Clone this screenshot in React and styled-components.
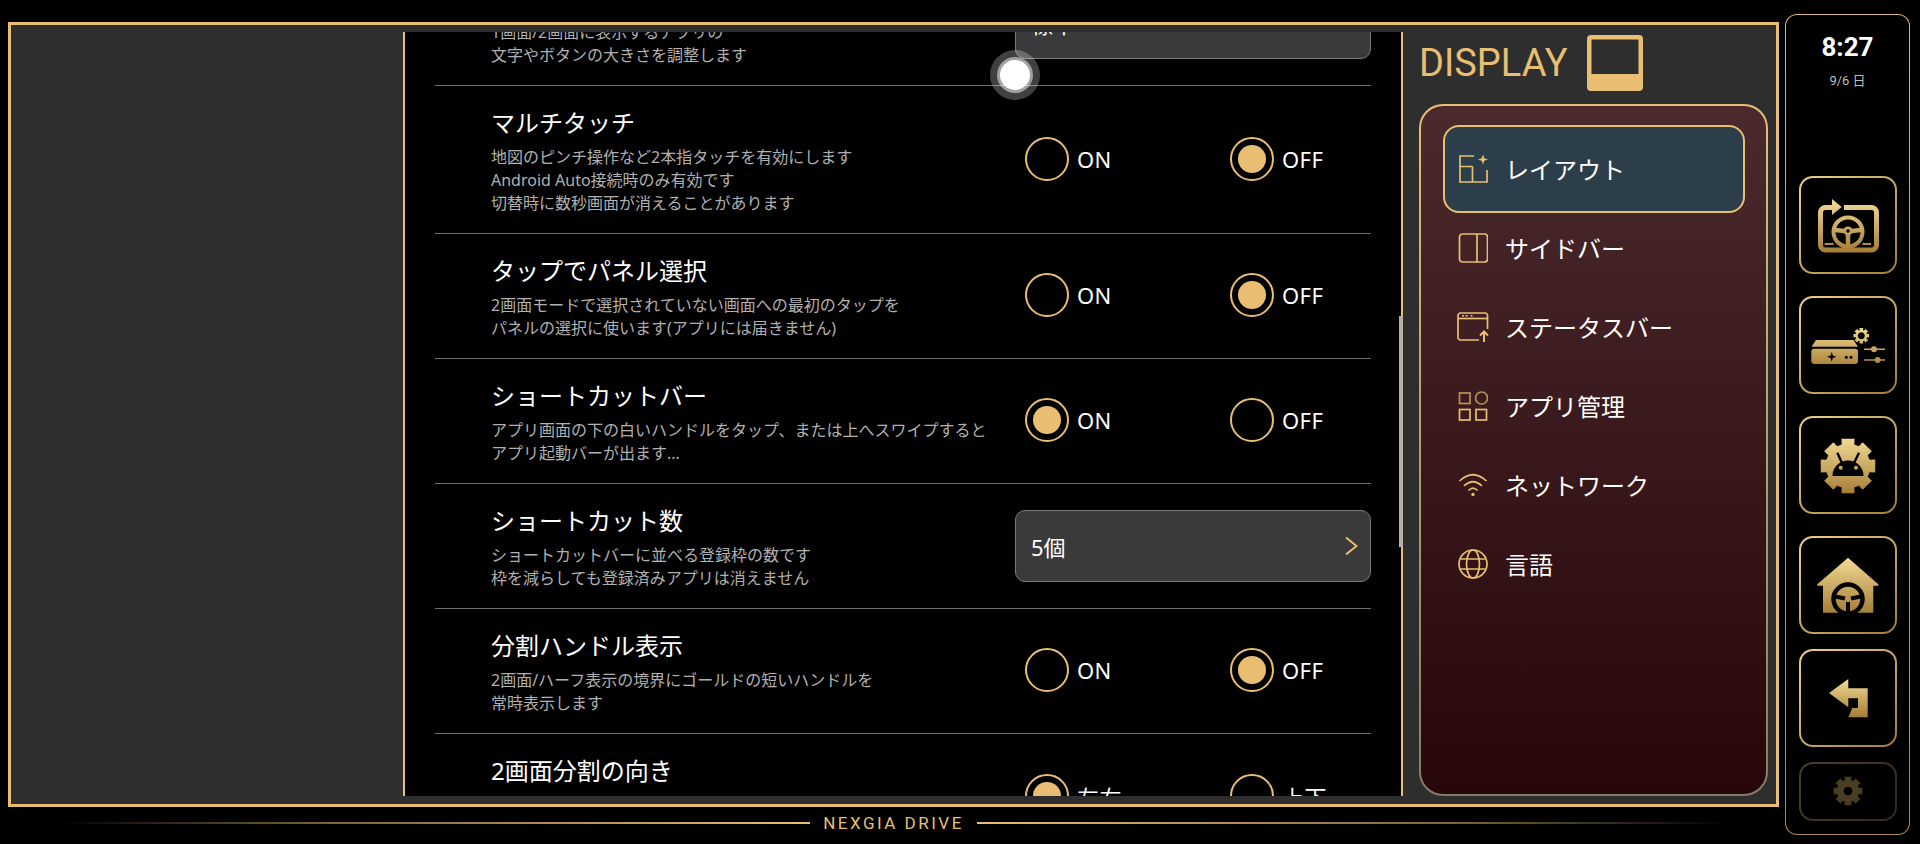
import styled, { createGlobalStyle } from "styled-components";

const GOLD = "#e8bf72";
const JP = `"Noto Sans", "Noto Sans CJK JP", sans-serif`;

const GlobalStyle = createGlobalStyle`
  * { box-sizing: border-box; }
  html, body { margin: 0; background: #000; overflow: hidden; }
  body { font-family: ${JP}; color: #fff; }
`;

const Page = styled.div`
  position: relative;
  display: flex;
  gap: 6px;
  width: 1920px;
  height: 844px;
  padding-left: 8px;
  overflow: hidden;
`;

const Main = styled.div`
  display: flex;
  flex-direction: column;
  width: 1771px;
`;

const Frame = styled.div`
  display: flex;
  height: 785px;
  margin-top: 22px;
  padding: 7px 0 8px;
  border: 3px solid ${GOLD};
  background: #2e2e2e;
`;

const EmptyArea = styled.div`
  width: 392px;
  flex-shrink: 0;
`;

const Panel = styled.div`
  position: relative;
  width: 1000px;
  flex-shrink: 0;
  background: #000;
  border-left: 2px solid ${GOLD};
  border-right: 2px solid ${GOLD};
`;

const Scroller = styled.div`
  height: 100%;
  padding: 0 30px;
  overflow: hidden;
`;

const ScrollList = styled.div`
  margin-top: -71px;
`;

const ScrollBar = styled.div`
  position: absolute;
  top: 284px;
  right: -2px;
  width: 4px;
  height: 231px;
  background: #b9b0a4;
`;

const Row = styled.div`
  display: flex;
  align-items: center;
  min-height: 125px;
  border-bottom: ${({ $last }) => ($last ? "none" : "1px solid #6e6e6e")};
`;

const RowText = styled.div`
  flex: 1;
  align-self: flex-start;
  padding: 20px 0 17.7px 56px;
`;

const RowTitle = styled.div`
  font-size: 24px;
  line-height: 33px;
  white-space: nowrap;
`;

const RowDesc = styled.div`
  margin-top: 6.5px;
  font-size: 16px;
  line-height: 23.4px;
  color: #b0b0b0;
  white-space: pre-line;
`;

const Controls = styled.div`
  width: 356px;
  flex-shrink: 0;
`;

const RadioGroup = styled.div`
  display: grid;
  grid-template-columns: 205px 1fr;
  padding: 0 0 2px 10px;
`;

const RadioItem = styled.div`
  display: flex;
  align-items: center;
  gap: 8px;
  font-size: 22px;
  letter-spacing: 0.4px;
`;

const RadioRing = styled.div`
  display: flex;
  align-items: center;
  justify-content: center;
  width: 44px;
  height: 44px;
  border: 2px solid ${GOLD};
  border-radius: 50%;
`;

const RadioDot = styled.div`
  width: 28px;
  height: 28px;
  border-radius: 50%;
  background: ${GOLD};
`;

const Select = styled.div`
  display: flex;
  align-items: center;
  justify-content: space-between;
  height: 72px;
  padding: 0 12px 0 15px;
  border: 1px solid #7a7a7a;
  border-radius: 10px;
  background: #3a3a3a;
  font-size: 22px;
`;

const TouchDot = styled.div`
  position: absolute;
  left: 990px;
  top: 50px;
  display: flex;
  align-items: center;
  justify-content: center;
  width: 50px;
  height: 50px;
  border-radius: 50%;
  background: rgba(255, 255, 255, 0.25);

  &::after {
    content: "";
    width: 30px;
    height: 30px;
    border-radius: 50%;
    background: #fff;
    box-shadow: 0 0 0 3px rgba(255, 255, 255, 0.5);
  }
`;

const Side = styled.div`
  display: flex;
  flex: 1;
  flex-direction: column;
  min-width: 0;
  padding: 3px 8px 0 16px;
`;

const SideHeader = styled.div`
  display: flex;
  align-items: center;
  gap: 19px;
  height: 56px;
  margin-bottom: 13px;
  font-family: Roboto, sans-serif;
  font-size: 38px;
  color: ${GOLD};
`;

const Menu = styled.div`
  flex: 1;
  display: flex;
  flex-direction: column;
  padding: 23.5px 21px 0 22px;
  border: 2px solid transparent;
  border-radius: 24px;
  background:
    linear-gradient(180deg, #4a2a2c 0%, #270709 100%) padding-box,
    linear-gradient(180deg, ${GOLD} 0%, #857c68 100%) border-box;
`;

const MenuItem = styled.div`
  display: flex;
  align-items: center;
  flex-shrink: 0;
  height: ${({ $active }) => ($active ? "88px" : "79px")};
  margin: ${({ $active }) => ($active ? "-4.5px 0" : "0")};
  padding-left: 12px;
  border: 2px solid ${({ $active }) => ($active ? GOLD : "transparent")};
  border-radius: 16px;
  background: ${({ $active }) => ($active ? "#2c3e4a" : "transparent")};
  font-size: 24px;
`;

const MenuIcon = styled.div`
  display: flex;
  align-items: center;
  justify-content: center;
  width: 32px;
  margin-right: 16px;
  flex-shrink: 0;
`;

const MenuLabel = styled.span`
  padding-bottom: 2px;
`;

const Brand = styled.div`
  display: flex;
  align-items: center;
  gap: 13px;
  height: 32px;
  padding: 0 50px;
  font-family: Roboto, sans-serif;
  font-size: 17px;
  letter-spacing: 2.5px;
  color: ${GOLD};
`;

const BrandLine = styled.div`
  flex: 1;
  height: 2px;
  background: linear-gradient(
    ${({ $flip }) => ($flip ? "270deg" : "90deg")},
    transparent 0%,
    #7a6238 35%,
    ${GOLD} 100%
  );
`;

const Rail = styled.div`
  display: flex;
  flex-direction: column;
  align-items: center;
  width: 125px;
  height: 821px;
  margin-top: 14px;
  border: 1.5px solid transparent;
  border-radius: 12px;
  background:
    linear-gradient(#000, #000) padding-box,
    linear-gradient(180deg, #d8b770 0%, #a88a4c 100%) border-box;
`;

const Clock = styled.div`
  display: flex;
  flex-direction: column;
  align-items: center;
  height: 160.5px;
  padding-top: 15px;
  font-family: Roboto, "Noto Sans CJK JP", sans-serif;
`;

const ClockTime = styled.div`
  font-size: 26px;
  font-weight: 700;
  line-height: 34px;
`;

const ClockDate = styled.div`
  margin-top: 8px;
  font-size: 13px;
  line-height: 18px;
  color: #bdbdbd;
`;

const ButtonStack = styled.div`
  display: flex;
  flex-direction: column;
  gap: ${({ $gap }) => $gap}px;
  margin-top: ${({ $top }) => $top}px;
`;

const RailButton = styled.div`
  display: flex;
  align-items: center;
  justify-content: center;
  width: 98px;
  height: ${({ $dim }) => ($dim ? "59px" : "98px")};
  border: 2px solid transparent;
  border-radius: 14px;
  background:
    linear-gradient(#000, #000) padding-box,
    linear-gradient(
        135deg,
        ${({ $dim }) => ($dim ? "#4a3f27, #33291a" : "#efd08a, #a07c36")}
      )
      border-box;
`;

// shared vertical gold gradient for the rail icons
const GoldFill = ({ id, y1 = 22, y2 = 78 }) => (
  <defs>
    <linearGradient id={id} gradientUnits="userSpaceOnUse" x1="0" y1={y1} x2="0" y2={y2}>
      <stop offset="0" stopColor="#f2da94" />
      <stop offset="1" stopColor="#a57d35" />
    </linearGradient>
  </defs>
);

const gearPath = (cx, cy, ro, ri, n, outer = 0.3, root = 0.36) => {
  const pitch = (Math.PI * 2) / n;
  const pts = [];
  for (let i = 0; i < n; i++) {
    const a = i * pitch - Math.PI / 2;
    [
      [ri, a - pitch * root],
      [ro, a - pitch * outer],
      [ro, a + pitch * outer],
      [ri, a + pitch * root],
    ].forEach(([r, t]) => {
      pts.push(`${(cx + r * Math.cos(t)).toFixed(2)} ${(cy + r * Math.sin(t)).toFixed(2)}`);
    });
  }
  return `M${pts.join("L")}Z`;
};

const RailSvg = ({ children, h = 94 }) => (
  <svg width="94" height={h} viewBox={`2 2 94 ${h}`} fill="none">
    {children}
  </svg>
);

const WheelRotateIcon = () => (
  <RailSvg>
    <GoldFill id="g1" y1={24} y2={76} />
    <path
      d="M35 31.5H26.5a5 5 0 0 0-5 5V69a5 5 0 0 0 5 5H72.500a5 5 0 0 0 5-5V36.500a5 5 0 0 0-5-5H45"
      stroke="url(#g1)"
      strokeWidth="5"
    />
    <path d="M33 23L42.700 31L33 39Z" fill="url(#g1)" />
    <circle cx="49" cy="56" r="14.500" stroke="url(#g1)" strokeWidth="4" />
    <circle cx="49" cy="55" r="3.200" stroke="url(#g1)" strokeWidth="2.800" />
    <path
      d="M36 54L45.500 55M62 54L52.500 55M49 58V71"
      stroke="url(#g1)"
      strokeWidth="4.500"
    />
    <path d="M25.700 68H34.500M63.500 68H72" stroke="url(#g1)" strokeWidth="1.800" />
  </RailSvg>
);

const BoxSettingsIcon = () => (
  <RailSvg>
    <GoldFill id="g2" y1={32} y2={72} />
    <path d="M17 44H54.500L59 50.800H12.500Z" fill="url(#g2)" />
    <rect x="12.300" y="52.800" width="46.700" height="15.200" rx="3" fill="url(#g2)" />
    <path
      d="M32.700 56L33.900 59.500L37.400 60.700L33.900 61.900L32.700 65.400L31.500 61.900L28 60.700L31.500 59.500Z"
      fill="#000"
    />
    <circle cx="47.300" cy="61.300" r="1.500" fill="#000" />
    <circle cx="52" cy="61.300" r="1.500" fill="#000" />
    <path
      fillRule="evenodd"
      d={`${gearPath(62.3, 39.7, 8, 5.8, 8)}M62.300 36.200a3.500 3.500 0 1 0 .01 0Z`}
      fill="url(#g2)"
    />
    <path d="M65 53.300H86M65 64H86" stroke="url(#g2)" strokeWidth="1.500" />
    <circle cx="75" cy="53.300" r="3" fill="url(#g2)" />
    <circle cx="78.700" cy="64" r="3" fill="url(#g2)" />
  </RailSvg>
);

const AndroidGearIcon = () => (
  <RailSvg>
    <GoldFill id="g3" y1={22} y2={78} />
    <path d={gearPath(49, 50, 28, 22.500, 8)} fill="url(#g3)" />
    <path d="M33.500 60a15.500 15.500 0 0 1 31 0Z" fill="#000" />
    <path d="M38.300 36.700L43 47M60 36.700L55 47" stroke="#000" strokeWidth="2.400" />
    <circle cx="41.700" cy="51.700" r="2" fill="url(#g3)" />
    <circle cx="57" cy="51.700" r="2" fill="url(#g3)" />
  </RailSvg>
);

const GarageIcon = () => (
  <RailSvg>
    <GoldFill id="g4" y1={22} y2={78} />
    <path
      d="M49 21.700L79.300 48.300V49.700H74.300V76.700H24V49.700H18.300V48.300Z"
      fill="url(#g4)"
    />
    <circle cx="49" cy="63" r="14.500" stroke="#000" strokeWidth="4.500" />
    <path d="M36 60.500L46 62.500M62 60.500L52 62.500M49 66V76" stroke="#000" strokeWidth="4" />
    <circle cx="49" cy="63" r="2.700" fill="url(#g4)" />
  </RailSvg>
);

const BackIcon = () => (
  <RailSvg>
    <GoldFill id="g5" y1={30} y2={68} />
    <path
      d="M30 44L49.300 30V39.300H68.700V68.300H49.300L53.300 59H59V49.300H49.300V58.300Z"
      fill="url(#g5)"
    />
  </RailSvg>
);

const DimGearIcon = () => (
  <svg width="54" height="54" viewBox="22 3 54 54" fill="none">
    <path
      fillRule="evenodd"
      d={`${gearPath(49, 30, 14.7, 11.2, 8)}M49 25.700a4.300 4.300 0 1 0 .01 0Z`}
      fill="#4a3e22"
    />
  </svg>
);

const MenuSvg = ({ w = 30, h = 30, children }) => (
  <svg
    width={w}
    height={h}
    viewBox={`0 0 ${w} ${h}`}
    fill="none"
    stroke={GOLD}
    strokeWidth="1.700"
  >
    {children}
  </svg>
);

const LayoutIcon = () => (
  <MenuSvg>
    <path d="M16 2H2V28H29V16M2 12.500H14.500M14.500 12.500V28" />
    <path
      d="M25 0.500L26.300 4.200L30 5.500L26.300 6.800L25 10.500L23.700 6.800L20 5.500L23.700 4.200Z"
      fill={GOLD}
      stroke="none"
    />
  </MenuSvg>
);

const SidebarIcon = () => (
  <MenuSvg>
    <rect x="1.500" y="1" width="28" height="28" rx="3" />
    <path d="M19 1V29" />
  </MenuSvg>
);

const StatusBarIcon = () => (
  <MenuSvg w={32} h={30}>
    <path d="M22 28H3.500a2.500 2.500 0 0 1-2.500-2.500V3.500A2.500 2.500 0 0 1 3.500 1H28a2.500 2.500 0 0 1 2.500 2.500V17" />
    <path d="M1 6.500H30.500" />
    <path d="M5 3.700H7M8.500 3.700H10.500M13.500 3.700H15.500" strokeWidth="1.500" />
    <path d="M27 30V20M23 23.500L27 19.500L31 23.500" strokeWidth="2" />
  </MenuSvg>
);

const AppsIcon = () => (
  <MenuSvg>
    <g opacity="0.72">
      <rect x="1.500" y="2" width="10.500" height="10.500" />
      <circle cx="23.500" cy="7" r="6" />
    </g>
    <rect x="1.500" y="18.500" width="10.500" height="10.500" />
    <rect x="18" y="18.500" width="10.500" height="10.500" />
  </MenuSvg>
);

const WifiIcon = () => (
  <MenuSvg h={24}>
    <path d="M1.500 8Q15-4.500 28.500 8M6 13Q15 4.500 24 13M10.500 17.500Q15 13 19.500 17.500" />
    <circle cx="15" cy="21.500" r="1.700" fill={GOLD} stroke="none" />
  </MenuSvg>
);

const GlobeIcon = () => (
  <MenuSvg>
    <circle cx="15" cy="15" r="14" />
    <ellipse cx="15" cy="15" rx="6.500" ry="14" />
    <path d="M2.500 10H27.500M2.500 20H27.500" />
  </MenuSvg>
);

const Chevron = () => (
  <svg width="13" height="20" viewBox="0 0 13 20" fill="none">
    <path d="M1 1.500L11.500 10L1 18.500" stroke={GOLD} strokeWidth="2" />
  </svg>
);

const DisplayIcon = () => (
  <svg width="56" height="56" viewBox="0 0 56 56">
    <rect width="56" height="56" rx="4" fill={GOLD} />
    <rect x="4.500" y="4.500" width="47" height="34.500" fill="#2e2e2e" />
  </svg>
);

const Radio = ({ label, checked }) => (
  <RadioItem>
    <RadioRing>{checked && <RadioDot />}</RadioRing>
    {label}
  </RadioItem>
);

const rows = [
  {
    title: "表示サイズ",
    desc: "1画面/2画面に表示するアプリの\n文字やボタンの大きさを調整します",
    select: "標準",
  },
  {
    title: "マルチタッチ",
    desc: "地図のピンチ操作など2本指タッチを有効にします\nAndroid Auto接続時のみ有効です\n切替時に数秒画面が消えることがあります",
    options: ["ON", "OFF"],
    value: 1,
  },
  {
    title: "タップでパネル選択",
    desc: "2画面モードで選択されていない画面への最初のタップを\nパネルの選択に使います(アプリには届きません)",
    options: ["ON", "OFF"],
    value: 1,
  },
  {
    title: "ショートカットバー",
    desc: "アプリ画面の下の白いハンドルをタップ、または上へスワイプすると\nアプリ起動バーが出ます...",
    options: ["ON", "OFF"],
    value: 0,
  },
  {
    title: "ショートカット数",
    desc: "ショートカットバーに並べる登録枠の数です\n枠を減らしても登録済みアプリは消えません",
    select: "5個",
  },
  {
    title: "分割ハンドル表示",
    desc: "2画面/ハーフ表示の境界にゴールドの短いハンドルを\n常時表示します",
    options: ["ON", "OFF"],
    value: 1,
  },
  {
    title: "2画面分割の向き",
    options: ["左右", "上下"],
    value: 0,
  },
];

const menu = [
  { label: "レイアウト", icon: <LayoutIcon />, active: true },
  { label: "サイドバー", icon: <SidebarIcon /> },
  { label: "ステータスバー", icon: <StatusBarIcon /> },
  { label: "アプリ管理", icon: <AppsIcon /> },
  { label: "ネットワーク", icon: <WifiIcon /> },
  { label: "言語", icon: <GlobeIcon /> },
];

const App = () => {
  return (
    <Page>
      <GlobalStyle />
      <Main>
        <Frame>
          <EmptyArea />
          <Panel>
            <Scroller>
              <ScrollList>
                {rows.map((r, i) => (
                  <Row key={r.title} $last={i === rows.length - 1}>
                    <RowText>
                      <RowTitle>{r.title}</RowTitle>
                      {r.desc && <RowDesc>{r.desc}</RowDesc>}
                    </RowText>
                    <Controls>
                      {r.select ? (
                        <Select>
                          {r.select}
                          <Chevron />
                        </Select>
                      ) : (
                        <RadioGroup>
                          {r.options.map((o, n) => (
                            <Radio key={o} label={o} checked={n === r.value} />
                          ))}
                        </RadioGroup>
                      )}
                    </Controls>
                  </Row>
                ))}
              </ScrollList>
            </Scroller>
            <ScrollBar />
          </Panel>
          <Side>
            <SideHeader>
              DISPLAY
              <DisplayIcon />
            </SideHeader>
            <Menu>
              {menu.map((m) => (
                <MenuItem key={m.label} $active={m.active}>
                  <MenuIcon>{m.icon}</MenuIcon>
                  <MenuLabel>{m.label}</MenuLabel>
                </MenuItem>
              ))}
            </Menu>
          </Side>
        </Frame>
        <Brand>
          <BrandLine />
          NEXGIA DRIVE
          <BrandLine $flip />
        </Brand>
      </Main>
      <Rail>
        <Clock>
          <ClockTime>8:27</ClockTime>
          <ClockDate>9/6 日</ClockDate>
        </Clock>
        <ButtonStack $gap={22}>
          <RailButton><WheelRotateIcon /></RailButton>
          <RailButton><BoxSettingsIcon /></RailButton>
          <RailButton><AndroidGearIcon /></RailButton>
          <RailButton><GarageIcon /></RailButton>
        </ButtonStack>
        <ButtonStack $gap={15} $top={15}>
          <RailButton><BackIcon /></RailButton>
          <RailButton $dim><DimGearIcon /></RailButton>
        </ButtonStack>
      </Rail>
      <TouchDot />
    </Page>
  );
};

export default App;
